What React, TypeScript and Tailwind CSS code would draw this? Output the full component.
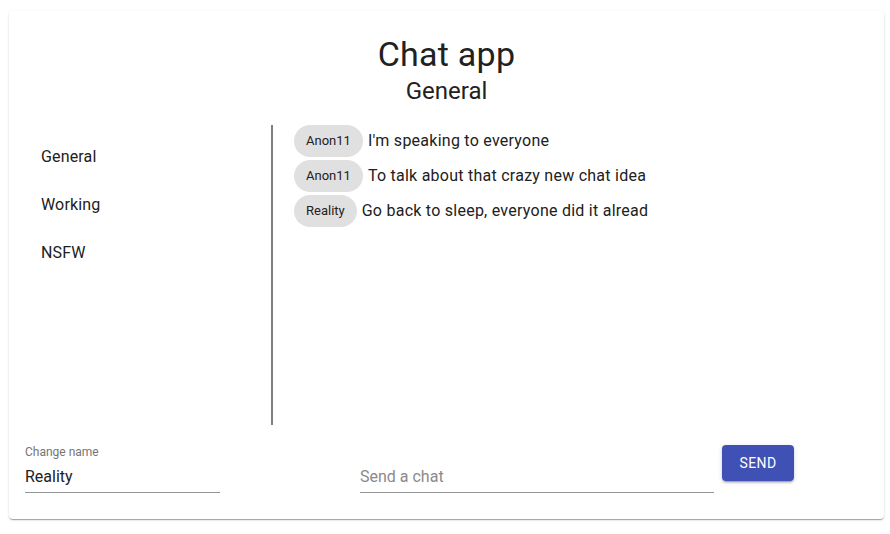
import { useState } from "react";

const messages = [
  { from: "Anon11", msg: "I'm speaking to everyone" },
  { from: "Anon11", msg: "To talk about that crazy new chat idea" },
  { from: "Reality", msg: "Go back to sleep, everyone did it alread" },
];

const topics = ["General", "Working", "NSFW"];

function App() {
  const [name, setName] = useState("Reality");
  const [text, setText] = useState("");

  return (
    <div className="min-h-[534px] bg-white pl-[9px] pt-[11px] font-['Roboto',sans-serif] text-[#212121]">
      <div className="w-[875px] h-[508px] rounded bg-white px-4 pt-[22px] shadow-[0_2px_1px_-1px_rgba(0,0,0,0.2),0_1px_1px_0_rgba(0,0,0,0.14),0_1px_3px_0_rgba(0,0,0,0.12)]">
        <h4 className="text-center text-[34px] leading-[42px] tracking-[0.25px]">Chat app</h4>
        <h5 className="text-center text-[24px] leading-[32px]">General</h5>

        <div className="mt-[18px] flex">
          <div className="w-[248px] h-[300px] border-r-2 border-[#808080]">
            <ul className="py-2">
              {topics.map((t) => (
                <li key={t} className="px-4 py-2">
                  <div className="my-1 text-[16px] leading-6 tracking-[0.15px]">{t}</div>
                </li>
              ))}
            </ul>
          </div>

          <div className="flex-1 pl-[21px]">
            {messages.map((m, i) => (
              <div key={i} className="mb-[3px] flex items-center gap-[5px]">
                <span className="inline-flex h-8 items-center rounded-2xl bg-[#e0e0e0] px-3 text-[13px] text-[#212121]">
                  {m.from}
                </span>
                <span className="text-[16px] leading-6 tracking-[0.25px]">{m.msg}</span>
              </div>
            ))}
          </div>
        </div>

        <div className="mt-5 flex items-start">
          <div className="w-[195px] flex flex-col">
            <label className="h-4 pt-[1px] text-[12px] leading-3 text-[#757575]">Change name</label>
            <input
              className="h-8 pt-[6px] pb-[7px] border-b border-[#949494] text-[16px] text-[#212121] outline-none"
              value={name}
              onChange={(e) => setName(e.target.value)}
            />
          </div>
          <div className="ml-[140px] w-[354px] pt-4">
            <input
              className="w-full h-8 pt-[6px] pb-[7px] border-b border-[#949494] text-[16px] text-[#212121] placeholder:text-[#8a8a8a] outline-none"
              placeholder="Send a chat"
              value={text}
              onChange={(e) => setText(e.target.value)}
            />
          </div>
          <button className="ml-2 h-9 w-[72px] rounded bg-[#3f51b5] text-[14px] font-normal uppercase tracking-[0.4px] text-white shadow-[0_3px_1px_-2px_rgba(0,0,0,0.2),0_2px_2px_0_rgba(0,0,0,0.14),0_1px_5px_0_rgba(0,0,0,0.12)]">
            Send
          </button>
        </div>
      </div>
    </div>
  );
}

export default App;
